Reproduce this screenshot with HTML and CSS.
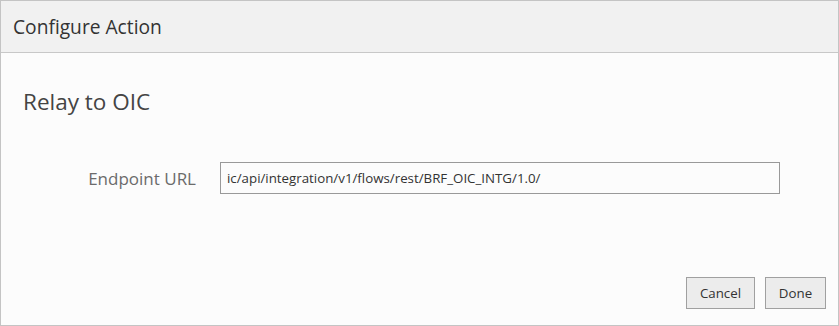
FILE: index.html
```html
<!DOCTYPE html>
<html>
<head>
<meta charset="utf-8">
<link rel="stylesheet" href="styles.css">
</head>
<body>
<div class="dialog">
  <div class="header"><span class="header-title">Configure Action</span></div>
  <div class="content">
    <h2 class="section-title">Relay to OIC</h2>
    <div class="field-row">
      <label class="field-label">Endpoint URL</label>
      <div class="field-input">ic/api/integration/v1/flows/rest/BRF_OIC_INTG/1.0/</div>
    </div>
  </div>
  <div class="footer">
    <button class="btn btn-cancel">Cancel</button>
    <button class="btn btn-done">Done</button>
  </div>
</div>
</body>
</html>
```
FILE: styles.css
```css
html, body {
  margin: 0;
  padding: 0;
  background: #ffffff;
}
.dialog {
  width: 839px;
  height: 326px;
  box-sizing: border-box;
  border: 1px solid #c4c4c4;
  background: #fcfcfc;
  display: flex;
  flex-direction: column;
  font-family: "Open Sans", "Noto Sans", sans-serif;
}
.header {
  height: 52px;
  box-sizing: border-box;
  background: #f1f1f1;
  border-bottom: 1px solid #c8c8c8;
  display: flex;
  align-items: center;
  padding-left: 12px;
}
.header-title {
  font-size: 19.2px;
  color: #333333;
}
.content {
  flex: 1;
  padding: 34px 0 0 22px;
}
.section-title {
  margin: 0;
  font-weight: normal;
  font-size: 22.5px;
  color: #444444;
  line-height: 30px;
}
.field-row {
  display: flex;
  align-items: center;
  margin-top: 45px;
}
.field-label {
  width: 197px;
  padding-right: 24px;
  box-sizing: border-box;
  text-align: right;
  font-size: 17px;
  color: #6b6b6b;
}
.field-input {
  width: 560px;
  height: 32px;
  box-sizing: border-box;
  border: 1px solid #999999;
  background: #fcfcfc;
  font-size: 13.3px;
  color: #333333;
  padding-left: 6px;
  display: flex;
  align-items: center;
}
.footer {
  display: flex;
  justify-content: flex-end;
  gap: 10px;
  padding: 0 12px 16px 0;
}
.btn {
  height: 32px;
  box-sizing: border-box;
  border: 1px solid #a0a0a0;
  background: #ececec;
  font-family: "Open Sans", "Noto Sans", sans-serif;
  font-size: 13.3px;
  color: #333333;
  border-radius: 0;
}
.btn-cancel { width: 69px; }
.btn-done { width: 61px; }
```
